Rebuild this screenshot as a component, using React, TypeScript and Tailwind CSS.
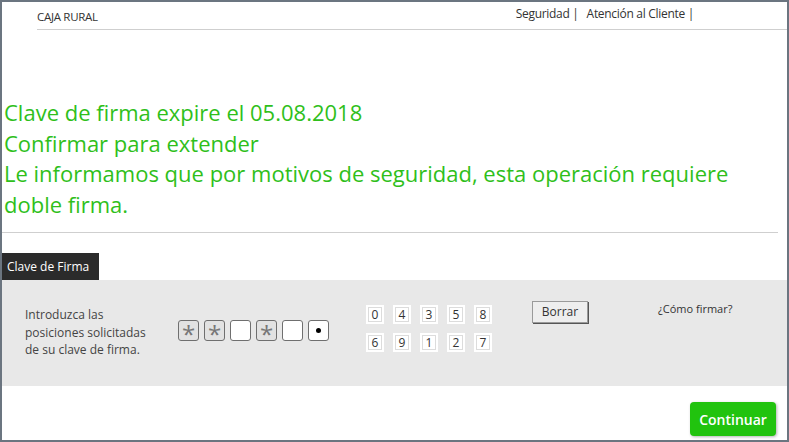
const positions = ['*', '*', '', '*', '', '•'];
const digits = [
  ['0', '4', '3', '5', '8'],
  ['6', '9', '1', '2', '7'],
];

export default function App() {
  return (
    <div
      className="h-[442px] w-[789px] overflow-hidden border-2 border-[#6b7580] bg-white text-[#333]"
      style={{ fontFamily: '"Open Sans", "Liberation Sans", sans-serif' }}
    >
      <header className="ml-[35px] flex h-[28px] items-start border-b border-[#cfcfcf]">
        <span className="mt-[6px] text-[11.5px] tracking-[-0.3px] text-[#333]">CAJA RURAL</span>
        <nav className="ml-[418px] mt-[3px] flex text-[12px] tracking-[-0.3px] text-[#333]">
          <span>Seguridad |</span>
          <span className="ml-[8px]">Atención al Cliente |</span>
        </nav>
      </header>

      <div className="mt-[67px] w-[760px] pl-[2px] text-[22px] leading-[30.5px] text-[#2fbf1b]">
        <p>Clave de firma expire el 05.08.2018</p>
        <p>Confirmar para extender</p>
        <p>Le informamos que por motivos de seguridad, esta operación requiere doble firma.</p>
      </div>

      <div className="mr-[9px] mt-[13px] border-t border-[#cfcfcf]" />

      <div className="mt-[20px] inline-flex h-[27px] items-center bg-[#2b2b2b] pl-[5px] pr-[10px] text-[12px] text-white">
        Clave de Firma
      </div>

      <section className="flex h-[106px] items-start bg-[#e8e8e8]">
        <p className="ml-[23px] mt-[26px] w-[128px] text-[12px] leading-[17.5px] text-[#444]">
          Introduzca las posiciones solicitadas de su clave de firma.
        </p>

        <div className="ml-[25px] mt-[40px] flex gap-[5px]">
          {positions.map((p, i) => (
            <div
              key={i}
              className={`flex h-[21px] w-[21px] items-center justify-center rounded-[3px] border border-[#6f6f6f] ${
                p === '*' ? 'bg-[#e2e2e2]' : 'bg-white'
              }`}
            >
              {p === '*' && <span className="mt-[6px] text-[24px] leading-none text-[#777]">*</span>}
              {p === '•' && <span className="h-[5px] w-[5px] rounded-full bg-black" />}
            </div>
          ))}
        </div>

        <div className="ml-[37px] mt-[25px] flex flex-col gap-[9px]">
          {digits.map((row, r) => (
            <div key={r} className="flex gap-[9px]">
              {row.map((d) => (
                <div key={d} className="flex h-[19px] w-[18px] items-center justify-center bg-white p-[2px]">
                  <div className="flex h-full w-full items-center justify-center border border-[#dcdcdc] text-[12px] text-[#333]">
                    {d}
                  </div>
                </div>
              ))}
            </div>
          ))}
        </div>

        <button className="ml-[40px] mt-[21px] h-[22px] w-[56px] border border-[#9a9a9a] bg-[#eeeeee] text-[12px] text-[#333] shadow-[1px_1px_0_#555]">
          Borrar
        </button>

        <span className="ml-[70px] mt-[21px] text-[11px] text-[#333]">¿Cómo firmar?</span>
      </section>

      <div className="mr-[11px] mt-[16px] flex justify-end">
        <button className="h-[34px] w-[86px] rounded-[4px] bg-[#21c30e] text-[14px] font-semibold text-white shadow-[1px_1px_3px_rgba(0,0,0,0.3)]">
          Continuar
        </button>
      </div>
    </div>
  );
}
